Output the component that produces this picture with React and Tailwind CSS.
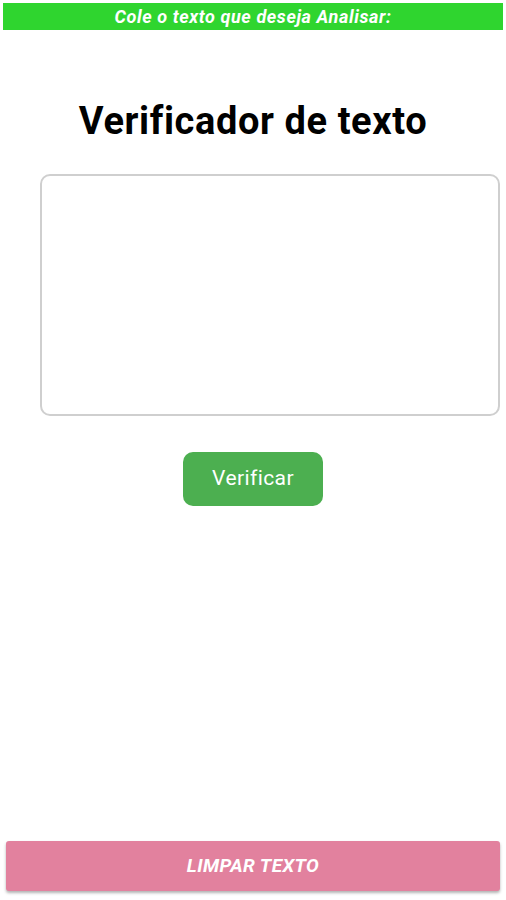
import React from 'react';

const App = () => {
  return (
    <div className="h-[900px] w-[506px] bg-white flex flex-col font-['Roboto',sans-serif]">
      {/* Top banner */}
      <div className="mx-[3px] mt-[3px] h-[27px] bg-[#2fd52f] flex items-center justify-center">
        <span className="text-white italic font-bold text-[18px] tracking-[0.6px] leading-none">
          Cole o texto que deseja Analisar:
        </span>
      </div>

      <h1 className="mt-[72px] text-center text-[38px] tracking-[0.6px] font-bold text-black leading-none">
        Verificador de texto
      </h1>

      <textarea
        className="mt-[34px] ml-[40px] w-[460px] h-[242px] rounded-[10px] border-2 border-[#cfcfcf] resize-none outline-none"
      />

      <div className="mt-[36px] flex justify-center">
        <button className="w-[140px] h-[54px] rounded-[10px] bg-[#4caf50] text-white text-[21px] tracking-[0.4px]">
          Verificar
        </button>
      </div>

      <div className="flex-1" />

      <div className="mx-[6px] mb-[9px] h-[50px] rounded-[3px] bg-[#e2819e] shadow-[0_2px_3px_rgba(0,0,0,0.3)] flex items-center justify-center">
        <span className="text-white italic font-bold text-[19px] tracking-[0.4px]">LIMPAR TEXTO</span>
      </div>
    </div>
  );
};

export default App;
